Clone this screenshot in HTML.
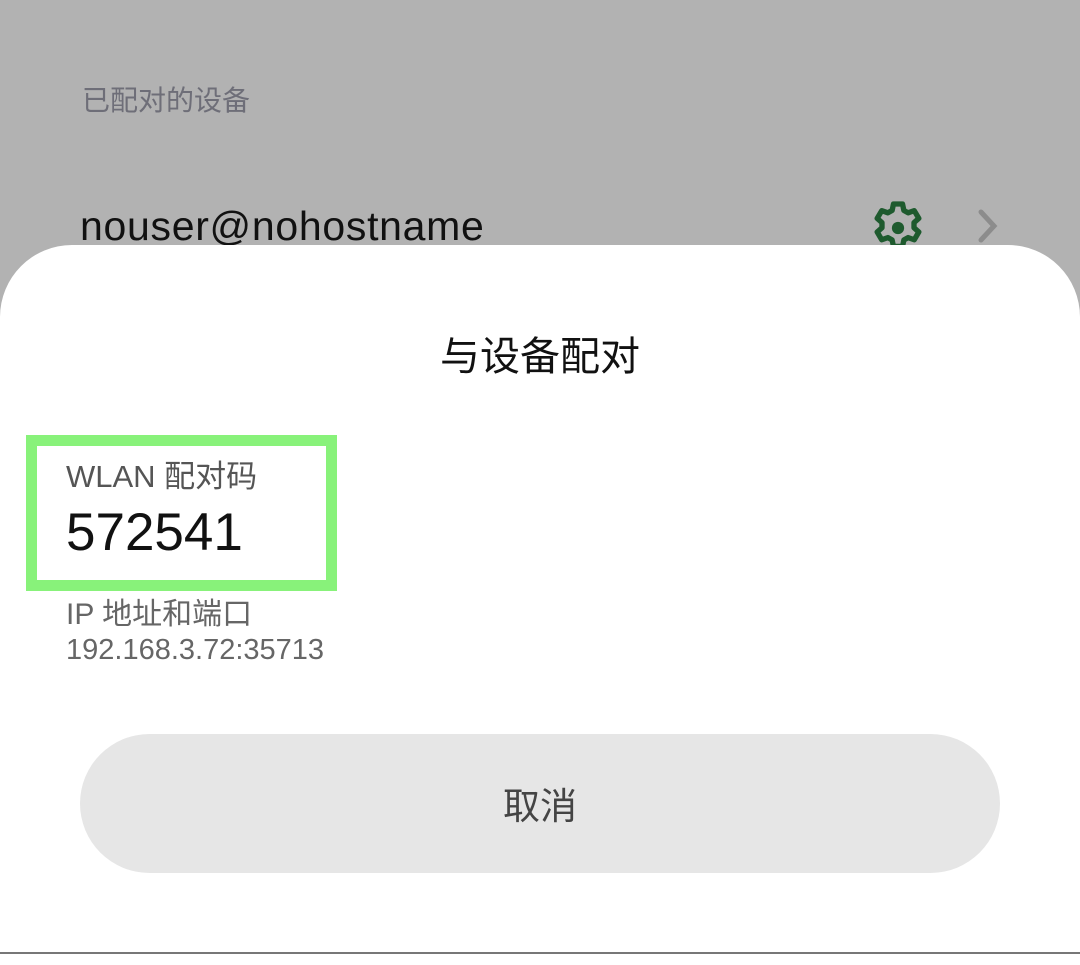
<!DOCTYPE html>
<html><head><meta charset="utf-8"><style>
body{margin:0;width:1080px;height:954px;background:#b2b2b2;position:relative;overflow:hidden;font-family:"Liberation Sans","Noto Sans CJK SC",sans-serif}
.t{position:absolute;white-space:nowrap}
.sheet{position:absolute;left:0;top:245px;width:1080px;height:720px;background:#fff;border-radius:72px 72px 0 0}
.box{position:absolute;left:26px;top:435px;width:289px;height:134px;border:11px solid #88f27a}
.btn{position:absolute;left:80px;top:734px;width:920px;height:139px;border-radius:70px;background:#e6e6e6}
</style></head><body>
<div class="t" style="left:82px;top:79px;font-size:28px;color:#6e6e78">已配对的设备</div>
<div class="t" style="left:80px;top:203px;font-size:41px;letter-spacing:0.7px;color:#111">nouser@nohostname</div>
<svg style="position:absolute;left:866px;top:196px" width="64" height="64" viewBox="0 0 24 24"><path fill="none" stroke="#1e5a2e" stroke-width="2" stroke-linejoin="round" d="M10.3 3h3.4l.5 2.4 1.6.9 2.3-.8 1.7 2.9-1.8 1.6v1.9l1.8 1.6-1.7 2.9-2.3-.8-1.6.9-.5 2.4h-3.4l-.5-2.4-1.6-.9-2.3.8-1.7-2.9 1.8-1.6v-1.9L4.2 8.4l1.7-2.9 2.3.8 1.6-.9z"/><circle cx="12" cy="12" r="2.3" fill="#1e5a2e"/></svg>
<svg style="position:absolute;left:976px;top:208px" width="24" height="36" viewBox="0 0 24 36"><path d="M5 4l13 14L5 32" fill="none" stroke="#8c8c8c" stroke-width="5" stroke-linecap="round"/></svg>
<div class="sheet"></div>
<div class="t" style="left:0;width:1080px;text-align:center;top:324px;font-size:40px;color:#111">与设备配对</div>
<div class="box"></div>
<div class="t" style="left:66px;top:451px;font-size:31px;color:#555">WLAN 配对码</div>
<div class="t" style="left:66px;top:502px;font-size:53px;color:#111">572541</div>
<div class="t" style="left:66px;top:589px;font-size:30px;color:#666">IP 地址和端口</div>
<div class="t" style="left:66px;top:634px;font-size:29px;color:#666">192.168.3.72:35713</div>
<div class="btn"></div>
<div class="t" style="left:80px;width:920px;text-align:center;top:776px;font-size:37px;color:#444">取消</div>
<div style="position:absolute;left:0;top:952px;width:1080px;height:2px;background:#777"></div>
</body></html>
